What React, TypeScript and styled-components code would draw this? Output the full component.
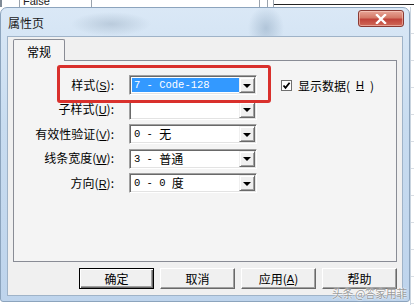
import React from 'react'
import styled, { createGlobalStyle } from 'styled-components'

const GlobalStyle = createGlobalStyle`
  html, body {
    margin: 0;
    padding: 0;
    background: #ffffff;
    overflow: hidden;
  }
  body {
    font-family: "Noto Sans CJK SC", "Liberation Sans", sans-serif;
    font-size: 12px;
    color: #000;
  }
`

const Page = styled.div`
  position: relative;
  width: 414px;
  height: 305px;
  display: flex;
  flex-direction: column;
  background: #ffffff;
  overflow: hidden;
`

// the window that sits behind the dialog
const Backdrop = styled.div`
  height: 7px;
  display: flex;
  flex-shrink: 0;
  border-left: 2px solid #7f8a96;
`

const BackCell = styled.div<{ w: number }>`
  width: ${({ w }) => w}px;
  flex-shrink: 0;
  border-right: 1px solid #9aa3ad;
  font-family: "Liberation Sans", sans-serif;
  font-size: 11px;
  line-height: 3px;
  padding-left: 3px;
  box-sizing: border-box;
  overflow: hidden;
  color: #222;
`

const BackLine = styled.div`
  flex: 1;
  margin-top: 4px;
  border-top: 1px solid #222;
`

const Row = styled.div`
  display: flex;
  flex: 1;
`

const Dialog = styled.div`
  width: 410px;
  height: 295px;
  flex-shrink: 0;
  box-sizing: border-box;
  display: flex;
  flex-direction: column;
  border: 1px solid #8ca4bd;
  border-radius: 7px 7px 3px 3px;
  background:
    radial-gradient(ellipse 40px 12px at 110px 16px, rgba(150, 170, 190, 0.45), transparent),
    radial-gradient(ellipse 18px 22px at 265px 20px, rgba(140, 165, 190, 0.5), transparent),
    linear-gradient(180deg, #dae8f6 0%, #c8dcf0 40%, #bed4ec 100%);
  padding: 0 6px 5px 6px;
`

const RightEdge = styled.div`
  flex: 1;
  border-left: 1px solid #c9d4df;
  background: repeating-linear-gradient(180deg, #fff 0 26px, #d8dde3 26px 27px);
`

const TitleBar = styled.div`
  height: 28px;
  display: flex;
  justify-content: space-between;
  align-items: flex-start;
`

const Title = styled.div`
  padding: 8px 0 0 1px;
  font-size: 12px;
  line-height: 14px;
  color: #1a1a1a;
`

const CloseButton = styled.div`
  width: 46px;
  height: 17px;
  margin: 2px -1px 0 0;
  box-sizing: border-box;
  display: flex;
  align-items: center;
  justify-content: center;
  border: 1px solid #8a3a33;
  border-radius: 3px;
  background: linear-gradient(180deg, #e8a597 0%, #d47a68 45%, #c0433a 55%, #cf6a58 100%);
  box-shadow: inset 0 0 0 1px rgba(255, 220, 210, 0.5);
`

const Body = styled.div`
  flex: 1;
  display: flex;
  flex-direction: column;
  background: #f0f0f0;
  border: 1px solid #9fb3c8;
  padding: 2px 5px 0 5px;
`

const TabStrip = styled.div`
  display: flex;
  height: 22px;
  margin-bottom: -1px;
  position: relative;
  z-index: 1;
`

const Tab = styled.div`
  width: 52px;
  box-sizing: border-box;
  border: 1px solid #898c95;
  border-bottom: none;
  border-radius: 2px 2px 0 0;
  background: #f4f4f4;
  display: flex;
  align-items: center;
  justify-content: center;
  padding-top: 2px;
  font-size: 12px;
`

const Panel = styled.div`
  height: 202px;
  box-sizing: border-box;
  border: 1px solid #898c95;
  background: #f4f4f4;
  padding: 14px 0 0 0;
`

const Form = styled.div`
  display: grid;
  grid-template-columns: 100px 128px auto;
  grid-auto-rows: 20px;
  column-gap: 15px;
  row-gap: 4.5px;
  align-items: center;
`

const Label = styled.div`
  text-align: right;
  white-space: nowrap;
  font-size: 12px;
  line-height: 20px;
`

const Key = styled.span`
  font-family: "Liberation Sans", sans-serif;
  font-size: 11px;
  text-decoration: underline;
`

const SelectBox = styled.div`
  height: 20px;
  box-sizing: border-box;
  display: flex;
  background: #fff;
  border-top: 1px solid #a0a0a0;
  border-left: 1px solid #a0a0a0;
  border-right: 1px solid #fff;
  border-bottom: 1px solid #fff;
  box-shadow: inset 1px 1px 0 #696969, inset -1px -1px 0 #e3e3e3;
  padding: 1px;
`

const SelectValue = styled.div<{ selected?: boolean }>`
  flex: 1;
  display: flex;
  align-items: center;
  padding-left: 2px;
  margin: 1px 0 1px 1px;
  background: ${({ selected }) => (selected ? '#3399ff' : 'transparent')};
  color: ${({ selected }) => (selected ? '#fff' : '#000')};
  font-family: "Liberation Mono", "Noto Sans CJK SC", monospace;
  font-size: 10.5px;
  white-space: pre;
  line-height: 16px;
`

const Cjk = styled.span`
  font-family: "Noto Sans CJK SC", sans-serif;
  font-size: 12px;
`

const DropButton = styled.div`
  width: 16px;
  box-sizing: border-box;
  display: flex;
  align-items: center;
  justify-content: center;
  background: #f0f0f0;
  border-top: 1px solid #f0f0f0;
  border-left: 1px solid #f0f0f0;
  border-right: 1px solid #696969;
  border-bottom: 1px solid #696969;
  box-shadow: inset 1px 1px 0 #fff, inset -1px -1px 0 #a0a0a0;

  &::after {
    content: '';
    border-left: 4px solid transparent;
    border-right: 4px solid transparent;
    border-top: 4px solid #000;
    margin-top: 1px;
  }
`

const CheckField = styled.label`
  display: flex;
  align-items: center;
  gap: 6px;
  margin-left: 9px;
  white-space: nowrap;
  font-size: 12px;
`

const CheckBox = styled.span`
  width: 11px;
  height: 11px;
  box-sizing: border-box;
  border: 1px solid #6f6f6f;
  background: #fff;
  display: flex;
  align-items: center;
  justify-content: center;
`

const Highlight = styled.div`
  position: absolute;
  left: 57px;
  top: 65px;
  width: 214px;
  height: 38px;
  box-sizing: border-box;
  border: 3px solid #d9302c;
  border-radius: 3px;
  pointer-events: none;
`

const ButtonRow = styled.div`
  display: flex;
  justify-content: flex-end;
  gap: 6px;
  margin-top: 6px;
`

const Button = styled.div<{ primary?: boolean }>`
  width: 75px;
  height: 21px;
  box-sizing: border-box;
  display: flex;
  align-items: center;
  justify-content: center;
  background: #f0f0f0;
  font-size: 12px;
  border-top: 1px solid ${({ primary }) => (primary ? '#000' : '#fff')};
  border-left: 1px solid ${({ primary }) => (primary ? '#000' : '#fff')};
  border-right: 1px solid ${({ primary }) => (primary ? '#000' : '#696969')};
  border-bottom: 1px solid ${({ primary }) => (primary ? '#000' : '#696969')};
  box-shadow: ${({ primary }) =>
    primary
      ? 'inset 1px 1px 0 #fff, inset -1px -1px 0 #696969, inset -2px -2px 0 #a0a0a0'
      : 'inset -1px -1px 0 #a0a0a0'};
`

const Watermark = styled.div`
  position: absolute;
  left: 332px;
  top: 287px;
  font-size: 11px;
  line-height: 12px;
  letter-spacing: -0.5px;
  color: rgba(70, 70, 70, 0.55);
  text-shadow: 0 0 1px #fff, 0 0 2px #fff;
  pointer-events: none;
`

const rows = [
  { label: '样式', key: 'S', value: <>7 - Code-128</>, selected: true },
  { label: '子样式', key: 'U', value: <></> },
  { label: '有效性验证', key: 'V', value: <>0 - <Cjk>无</Cjk></> },
  { label: '线条宽度', key: 'W', value: <>3 - <Cjk>普通</Cjk></> },
  { label: '方向', key: 'R', value: <>0 - 0 <Cjk>度</Cjk></> },
]

export default function App() {
  return (
    <Page>
      <GlobalStyle />
      <Backdrop>
        <BackCell w={18} />
        <BackCell w={72}>False</BackCell>
        <BackCell w={168} />
        <BackCell w={8} />
        <BackCell w={6} />
        <BackLine />
      </Backdrop>
      <Row>
        <Dialog>
          <TitleBar>
            <Title>属性页</Title>
            <CloseButton>
              <svg width="12" height="10" viewBox="0 0 12 10">
                <path
                  d="M2 1 L10 9 M10 1 L2 9"
                  stroke="#fff"
                  strokeWidth="2.4"
                  strokeLinecap="square"
                />
              </svg>
            </CloseButton>
          </TitleBar>
          <Body>
            <TabStrip>
              <Tab>常规</Tab>
            </TabStrip>
            <Panel>
              <Form>
                {rows.map((row, index) => (
                  <React.Fragment key={row.key}>
                    <Label>
                      {row.label}(<Key>{row.key}</Key>):
                    </Label>
                    <SelectBox>
                      <SelectValue selected={row.selected}>{row.value}</SelectValue>
                      <DropButton />
                    </SelectBox>
                    {index === 0 ? (
                      <CheckField>
                        <CheckBox>
                          <svg width="9" height="9" viewBox="0 0 9 9">
                            <path
                              d="M1.5 4.5 L3.5 6.8 L7.6 1.8"
                              stroke="#000"
                              strokeWidth="1.8"
                              fill="none"
                            />
                          </svg>
                        </CheckBox>
                        显示数据(<Key>H</Key>)
                      </CheckField>
                    ) : (
                      <span />
                    )}
                  </React.Fragment>
                ))}
              </Form>
            </Panel>
            <ButtonRow>
              <Button primary>确定</Button>
              <Button>取消</Button>
              <Button>
                应用(<Key>A</Key>)
              </Button>
              <Button>帮助</Button>
            </ButtonRow>
          </Body>
        </Dialog>
        <RightEdge />
      </Row>
      <Highlight />
      <Watermark>头条 @答家用菲</Watermark>
    </Page>
  )
}
